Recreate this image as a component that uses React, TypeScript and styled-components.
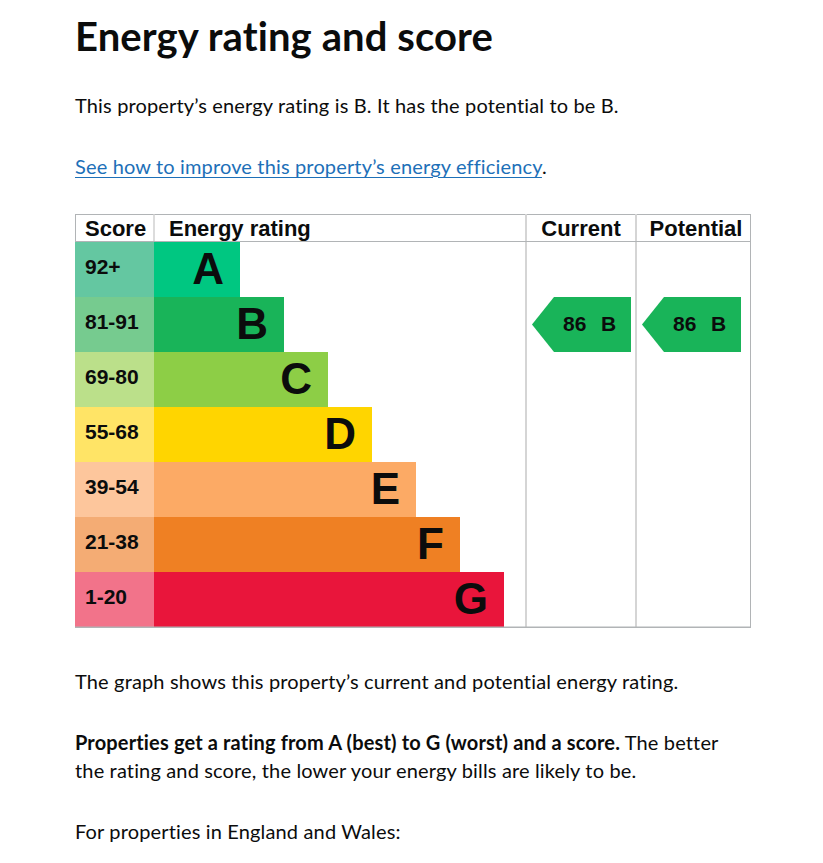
import React from 'react';
import styled, { createGlobalStyle } from 'styled-components';

const GlobalStyle = createGlobalStyle`
  body {
    margin: 0;
    background: #ffffff;
    color: #0b0c0c;
    font-family: Lato, "Noto Sans", Arial, sans-serif;
  }
`;

const Page = styled.main`
  width: 676px;
  padding: 16px 0 0 75px;
`;

const Heading = styled.h1`
  margin: 0 0 35px;
  font-size: 40px;
  line-height: 40px;
  font-weight: 700;
  letter-spacing: 0.1px;
`;

const Para = styled.p`
  margin: 0 0 33px;
  font-size: 20px;
  line-height: 28px;
  letter-spacing: 0.15px;
`;

const Link = styled.a`
  color: #1d70b8;
  text-decoration: underline;
  text-decoration-thickness: 1px;
  text-underline-offset: 3px;
`;

const ChartWrap = styled.div`
  margin: 0 0 39px;
  padding-top: 1px;
  line-height: 0;
`;

const ChartText = styled.text<{ $size: number }>`
  font-family: "Liberation Sans", Arial, sans-serif;
  font-weight: 700;
  font-size: ${(p) => p.$size}px;
  fill: #0b0c0c;
`;

const bands = [
  { score: '92+', letter: 'A', color: '#00c781', light: '#64c7a1' },
  { score: '81-91', letter: 'B', color: '#19b459', light: '#76cb8f' },
  { score: '69-80', letter: 'C', color: '#8dce46', light: '#bbe08a' },
  { score: '55-68', letter: 'D', color: '#ffd500', light: '#ffe466' },
  { score: '39-54', letter: 'E', color: '#fcaa65', light: '#fdc69c' },
  { score: '21-38', letter: 'F', color: '#ef8023', light: '#f4ac74' },
  { score: '1-20', letter: 'G', color: '#e9153b', light: '#f2738a' },
];

const ROW_TOP = 28;
const ROW_H = 55;

const Arrow = ({ x, row, label, letter }: { x: number; row: number; label: string; letter: string }) => {
  const top = ROW_TOP + row * ROW_H;
  const bottom = top + ROW_H;
  const mid = top + ROW_H / 2;
  return (
    <g>
      <polygon
        points={`${x},${mid} ${x + 22},${top} ${x + 99},${top} ${x + 99},${bottom} ${x + 22},${bottom}`}
        fill="#19b459"
      />
      <ChartText $size={21} x={x + 31} y={top + 34}>{label}</ChartText>
      <ChartText $size={21} x={x + 69} y={top + 34}>{letter}</ChartText>
    </g>
  );
};

const EnergyChart = () => (
  <svg width="676" height="414" viewBox="0 0 676 414">
    <rect x="0.5" y="0.5" width="675" height="413" fill="#ffffff" stroke="#b1b4b6" />
    <line x1="79" y1="0" x2="79" y2="28" stroke="#d0d0d0" strokeWidth="1.5" />
    <line x1="451" y1="0" x2="451" y2="413" stroke="#d5d5d5" strokeWidth="2" />
    <line x1="561" y1="0" x2="561" y2="413" stroke="#d5d5d5" strokeWidth="2" />
    <line x1="0" y1="27.5" x2="676" y2="27.5" stroke="#b1b4b6" />
    <ChartText $size={22} x="10" y="22">Score</ChartText>
    <ChartText $size={22} x="94" y="22">Energy rating</ChartText>
    <ChartText $size={22} x="506" y="22" textAnchor="middle">Current</ChartText>
    <ChartText $size={22} x="621" y="22" textAnchor="middle">Potential</ChartText>
    {bands.map((b, i) => {
      const y = ROW_TOP + i * ROW_H;
      const end = 79 + 86 + i * 44;
      return (
        <g key={b.letter}>
          <rect x="0" y={y} width="79" height={ROW_H} fill={b.light} />
          <rect x="79" y={y} width={end - 79} height={ROW_H} fill={b.color} />
          <ChartText $size={21} x="10" y={y + 32}>{b.score}</ChartText>
          <ChartText $size={44} x={end - 16} y={y + 42} textAnchor="end">{b.letter}</ChartText>
        </g>
      );
    })}
    <Arrow x={457} row={1} label="86" letter="B" />
    <Arrow x={567} row={1} label="86" letter="B" />
    <line x1="0" y1="413" x2="676" y2="413" stroke="#b1b4b6" />
  </svg>
);

export default function App() {
  return (
    <>
      <GlobalStyle />
      <Page>
        <Heading>Energy rating and score</Heading>
        <Para>This property’s energy rating is B. It has the potential to be B.</Para>
        <Para>
          <Link href="#">See how to improve this property’s energy efficiency</Link>.
        </Para>
        <ChartWrap>
          <EnergyChart />
        </ChartWrap>
        <Para>The graph shows this property’s current and potential energy rating.</Para>
        <Para>
          <strong>Properties get a rating from A (best) to G (worst) and a score.</strong> The better
          the rating and score, the lower your energy bills are likely to be.
        </Para>
        <Para>For properties in England and Wales:</Para>
      </Page>
    </>
  );
}
